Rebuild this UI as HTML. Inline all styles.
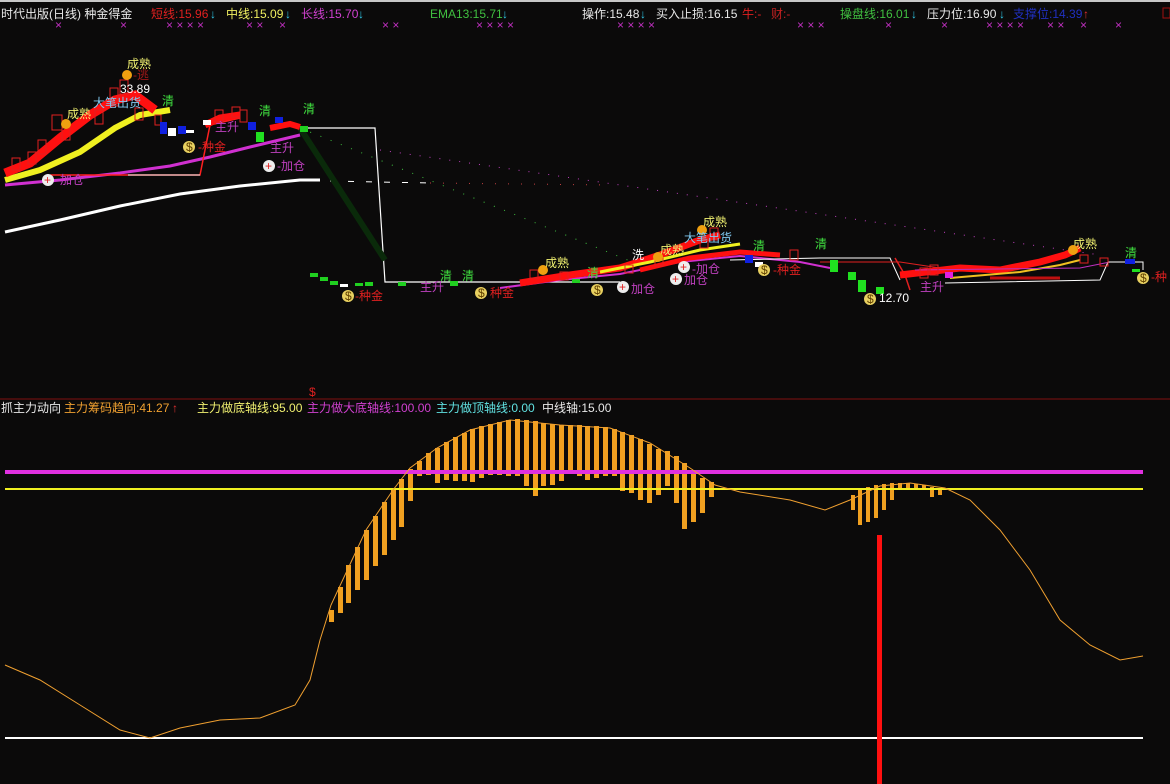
<!DOCTYPE html>
<html><head><meta charset="utf-8"><style>
html,body{margin:0;padding:0;background:#0b0a0a;}
svg{display:block}
text{font-family:"Liberation Sans","Noto Sans CJK SC","WenQuanYi Zen Hei",sans-serif;font-size:12px}
</style></head><body>
<svg width="1170" height="784" viewBox="0 0 1170 784" xmlns="http://www.w3.org/2000/svg">
<rect width="1170" height="784" fill="#0b0a0a"/>
<rect width="1170" height="2" fill="#c8c8c8"/>
<!-- header -->
<text x="1" y="18" fill="#e8e8e8">时代出版(日线) 种金得金</text>
<text x="151" y="18" fill="#e02020">短线:15.96</text><text x="210" y="18" fill="#30c8e8">↓</text>
<text x="226" y="18" fill="#f0f060">中线:15.09</text><text x="285" y="18" fill="#30c8e8">↓</text>
<text x="301" y="18" fill="#d040d0">长线:15.70</text><text x="358" y="18" fill="#30c8e8">↓</text>
<text x="430" y="18" fill="#40c040">EMA13:15.71</text><text x="502" y="18" fill="#30c8e8">↓</text>
<text x="582" y="18" fill="#e8e8e8">操作:15.48</text><text x="640" y="18" fill="#30c8e8">↓</text>
<text x="656" y="18" fill="#e8e8e8">买入止损:16.15</text>
<text x="742" y="18" fill="#e02020">牛:-</text><text x="771" y="18" fill="#c02020">财:-</text>
<text x="840" y="18" fill="#40c040">操盘线:16.01</text><text x="911" y="18" fill="#30c8e8">↓</text>
<text x="927" y="18" fill="#e8e8e8">压力位:16.90</text><text x="999" y="18" fill="#30c8e8">↓</text>
<text x="1013" y="18" fill="#2030c0">支撑位:14.39</text><text x="1083" y="18" fill="#e03030">↑</text>
<rect x="1163" y="8" width="7" height="10" fill="none" stroke="#a01010"/>
<g fill="#c030c0" font-size="9">
<text x="55" y="29" font-size="9">×</text><text x="120" y="29" font-size="9">×</text><text x="166" y="29" font-size="9">× × × ×</text><text x="246" y="29" font-size="9">× ×</text><text x="279" y="29" font-size="9">×</text><text x="382" y="29" font-size="9">× ×</text><text x="476" y="29" font-size="9">× × ×  ×</text>
<text x="617" y="29" font-size="9">× × × ×</text><text x="797" y="29" font-size="9">× × ×</text><text x="885" y="29" font-size="9">×</text><text x="941" y="29" font-size="9">×</text><text x="986" y="29" font-size="9">× × × ×</text><text x="1047" y="29" font-size="9">× ×</text><text x="1080" y="29" font-size="9">×</text><text x="1115" y="29" font-size="9">×</text>
</g>
<!-- main panel -->
<g fill="none">
<polyline points="5,232 60,220 120,206 180,194 240,186 300,180 320,180" stroke="#ffffff" stroke-width="3"/>
<line x1="330" y1="181" x2="430" y2="183" stroke="#ffffff" stroke-dasharray="6,12"/>
<polyline points="5,185 60,180 120,173 170,166 210,157 250,147 300,135" stroke="#d030d0" stroke-width="3"/>
<polyline points="5,180 40,170 80,152 115,128 140,115 170,110" stroke="#f0f020" stroke-width="6"/>
<polyline points="5,173 30,163 60,138 90,115 115,100 135,95 155,110" stroke="#ff1010" stroke-width="9"/>
<polyline points="50,175 200,175 210,125 240,118" stroke="#ff2020" stroke-width="1.5"/>
<polyline points="200,175 128,175" stroke="#fff"/>
<polyline points="300,128 375,128 385,282 620,282" stroke="#ffffff" stroke-width="1.2"/>
<line x1="300" y1="128" x2="385" y2="260" stroke="#0a2a0a" stroke-width="6"/>
<line x1="300" y1="128" x2="640" y2="265" stroke="#40c040" stroke-dasharray="1,10"/>
<line x1="380" y1="150" x2="1100" y2="255" stroke="#c040c0" stroke-dasharray="1,9"/>
<line x1="430" y1="183" x2="610" y2="185" stroke="#c04040" stroke-dasharray="1,12"/>
<polyline points="205,125 220,118 240,115" stroke="#ff1010" stroke-width="7"/>
<polyline points="270,128 290,124 300,127" stroke="#ff1010" stroke-width="6"/>
<polyline points="500,288 560,280 620,274 680,262 740,256 800,262 830,268" stroke="#d030d0" stroke-width="2"/>
<polyline points="520,283 570,275 620,268 660,255 700,240 720,235" stroke="#ff1010" stroke-width="7"/>
<polyline points="600,272 650,262 700,250 740,244" stroke="#f0f020" stroke-width="3"/>
<polyline points="640,270 690,258 740,252 780,255" stroke="#ff1010" stroke-width="5"/>
<polyline points="730,260 820,258 890,258 900,280" stroke="#ffffff"/>
<polyline points="895,258 905,275 910,290" stroke="#e02020" stroke-width="1.5"/>
<polyline points="900,275 960,268 1000,270 1040,262 1065,255 1080,248" stroke="#ff1010" stroke-width="7"/>
<polyline points="950,278 1020,272 1060,265 1080,260" stroke="#f0c020" stroke-width="2"/>
<polyline points="915,270 1080,268 1110,262" stroke="#c030c0"/>
<polyline points="945,283 1100,280 1108,262 1143,262 1143,270" stroke="#ffffff"/>
<polyline points="990,278 1060,278" stroke="#c01010" stroke-width="3"/>
<polyline points="820,262 900,262 940,268" stroke="#e02020"/>
</g>
<!-- candles -->
<g fill="none" stroke="#e02020">
<rect x="12" y="158" width="8" height="12"/><rect x="28" y="152" width="8" height="12"/><rect x="38" y="140" width="8" height="14"/><rect x="52" y="115" width="10" height="15"/><rect x="62" y="128" width="8" height="12"/><rect x="95" y="110" width="8" height="14"/><rect x="110" y="88" width="8" height="18"/><rect x="120" y="80" width="8" height="14"/><rect x="135" y="108" width="8" height="12"/><rect x="155" y="115" width="6" height="10"/><rect x="215" y="110" width="8" height="12"/><rect x="232" y="107" width="8" height="10"/><rect x="240" y="110" width="7" height="12"/>
<rect x="530" y="270" width="8" height="8"/><rect x="625" y="265" width="8" height="8"/><rect x="700" y="238" width="8" height="10"/><rect x="710" y="228" width="8" height="12"/><rect x="790" y="250" width="8" height="10"/><rect x="920" y="268" width="8" height="10"/><rect x="1080" y="255" width="8" height="8"/><rect x="1100" y="258" width="8" height="8"/>
<rect x="560" y="272" width="8" height="8"/><rect x="655" y="258" width="8" height="8"/><rect x="930" y="265" width="8" height="10"/>
</g>
<g>
<rect x="160" y="122" width="7" height="12" fill="#1020e0"/><rect x="168" y="128" width="8" height="8" fill="#fff"/><rect x="178" y="126" width="8" height="8" fill="#1020e0"/><rect x="186" y="130" width="8" height="3" fill="#fff"/>
<rect x="203" y="120" width="8" height="5" fill="#fff"/><rect x="248" y="122" width="8" height="8" fill="#1020e0"/><rect x="256" y="132" width="8" height="10" fill="#20e020"/><rect x="275" y="117" width="8" height="6" fill="#1020e0"/><rect x="300" y="126" width="8" height="6" fill="#20d020"/>
<rect x="310" y="273" width="8" height="4" fill="#20d020"/><rect x="320" y="277" width="8" height="4" fill="#20d020"/><rect x="330" y="281" width="8" height="4" fill="#20d020"/><rect x="340" y="284" width="8" height="3" fill="#fff"/><rect x="355" y="283" width="8" height="3" fill="#20d020"/><rect x="365" y="282" width="8" height="4" fill="#20d020"/><rect x="398" y="282" width="8" height="4" fill="#20d020"/><rect x="450" y="281" width="8" height="5" fill="#20d020"/><rect x="572" y="279" width="8" height="4" fill="#20d020"/>
<rect x="745" y="255" width="8" height="8" fill="#1020e0"/><rect x="755" y="262" width="8" height="5" fill="#fff"/><rect x="830" y="260" width="8" height="12" fill="#20e020"/><rect x="848" y="272" width="8" height="8" fill="#20e020"/><rect x="858" y="280" width="8" height="12" fill="#20e020"/><rect x="876" y="287" width="8" height="7" fill="#20e020"/><rect x="945" y="272" width="8" height="6" fill="#e020e0"/><rect x="1125" y="259" width="10" height="5" fill="#1020e0"/><rect x="1132" y="269" width="8" height="3" fill="#20e020"/>
</g>
<!-- labels -->
<g>
<text x="127" y="68" fill="#f0f070" font-size="13">成熟</text><circle cx="127" cy="75" r="5" fill="#f0a010"/><text x="133" y="79" fill="#a01818" font-size="12">-逃</text>
<text x="120" y="93" fill="#fff" font-size="12">33.89</text>
<text x="67" y="118" fill="#f0f070" font-size="13">成熟</text><circle cx="66" cy="124" r="5" fill="#f0a010"/>
<text x="93" y="107" fill="#80c8f0" font-size="13">大笔出货</text>
<text x="162" y="105" fill="#40e040" font-size="13">清</text><text x="259" y="115" fill="#40e040" font-size="13">清</text><text x="303" y="113" fill="#40e040" font-size="13">清</text>
<text x="215" y="131" fill="#c040c0" font-size="13">主升</text><text x="270" y="152" fill="#c040c0" font-size="13">主升</text>
<circle cx="189" cy="147" r="6" fill="#e8d060"/><text x="186" y="151" fill="#604000" font-size="9">$</text><text x="198" y="151" fill="#e02020" font-size="13">-种金</text>
<circle cx="48" cy="180" r="6" fill="#eee"/><text x="44" y="184" fill="#e02020" font-size="11">+</text><text x="56" y="184" fill="#c040c0" font-size="13">-加仓</text>
<circle cx="269" cy="166" r="6" fill="#eee"/><text x="265" y="170" fill="#e02020" font-size="11">+</text><text x="277" y="170" fill="#c040c0" font-size="13">-加仓</text>
<circle cx="348" cy="296" r="6" fill="#e8d060"/><text x="345" y="300" fill="#604000" font-size="9">$</text><text x="355" y="300" fill="#e02020" font-size="13">-种金</text>
<text x="420" y="291" fill="#c040c0" font-size="13">主升</text><text x="440" y="280" fill="#40e040" font-size="13">清</text><text x="462" y="280" fill="#40e040" font-size="13">清</text>
<circle cx="481" cy="293" r="6" fill="#e8d060"/><text x="478" y="297" fill="#604000" font-size="9">$</text><text x="490" y="297" fill="#e02020" font-size="13">种金</text>
<text x="545" y="267" fill="#f0f070" font-size="13">成熟</text><circle cx="543" cy="270" r="5" fill="#f0a010"/><text x="587" y="277" fill="#40e040" font-size="13">清</text>
<circle cx="597" cy="290" r="6" fill="#e8d060"/><text x="594" y="294" fill="#604000" font-size="9">$</text>
<circle cx="623" cy="287" r="6" fill="#eee"/><text x="619" y="291" fill="#e02020" font-size="11">+</text><text x="631" y="293" fill="#c040c0" font-size="13">加仓</text>
<text x="632" y="259" fill="#fff" font-size="13">洗</text><text x="660" y="254" fill="#f0f070" font-size="13">成熟</text><circle cx="658" cy="257" r="5" fill="#f0a010"/>
<text x="703" y="226" fill="#f0f070" font-size="13">成熟</text><circle cx="702" cy="230" r="5" fill="#f0a010"/><text x="684" y="242" fill="#80c8f0" font-size="13">大笔出货</text>
<circle cx="684" cy="267" r="6" fill="#eee"/><text x="680" y="271" fill="#e02020" font-size="11">+</text><text x="692" y="273" fill="#c040c0" font-size="13">-加仓</text>
<circle cx="676" cy="279" r="6" fill="#eee"/><text x="672" y="283" fill="#e02020" font-size="11">+</text><text x="684" y="284" fill="#c040c0" font-size="13">加仓</text>
<text x="753" y="250" fill="#40e040" font-size="13">清</text><text x="815" y="248" fill="#40e040" font-size="13">清</text>
<circle cx="764" cy="270" r="6" fill="#e8d060"/><text x="761" y="274" fill="#604000" font-size="9">$</text><text x="773" y="274" fill="#e02020" font-size="13">-种金</text>
<circle cx="870" cy="299" r="6" fill="#e8d060"/><text x="867" y="303" fill="#604000" font-size="9">$</text><text x="879" y="302" fill="#fff" font-size="12">12.70</text>
<text x="920" y="291" fill="#c040c0" font-size="13">主升</text>
<text x="1073" y="248" fill="#f0f070" font-size="13">成熟</text><circle cx="1073" cy="250" r="5" fill="#f0a010"/><text x="1125" y="257" fill="#40e040" font-size="13">清</text>
<circle cx="1143" cy="278" r="6" fill="#e8d060"/><text x="1140" y="282" fill="#604000" font-size="9">$</text><text x="1151" y="281" fill="#e02020" font-size="13">-种</text>
</g>
<!-- separator -->
<text x="309" y="396" fill="#e02020" font-size="11">$</text>
<line x1="0" y1="399" x2="1170" y2="399" stroke="#801010"/>
<!-- indicator header -->
<text x="1" y="412" fill="#e8e8e8">抓主力动向</text>
<text x="64" y="412" fill="#f0a030">主力筹码趋向:41.27</text><text x="172" y="412" fill="#e03030">↑</text>
<text x="197" y="412" fill="#f0f070">主力做底轴线:95.00</text>
<text x="307" y="412" fill="#d040d0">主力做大底轴线:100.00</text>
<text x="436" y="412" fill="#60e0e0">主力做顶轴线:0.00</text>
<text x="542" y="412" fill="#e8e8e8">中线轴:15.00</text>
<!-- indicator -->
<g fill="#f0a020">
<rect x="329" y="610" width="5" height="12"/><rect x="338" y="587" width="5" height="26"/><rect x="346" y="565" width="5" height="38"/><rect x="355" y="547" width="5" height="43"/><rect x="364" y="530" width="5" height="50"/><rect x="373" y="516" width="5" height="50"/><rect x="382" y="502" width="5" height="53"/><rect x="391" y="489" width="5" height="51"/><rect x="399" y="479" width="5" height="48"/><rect x="408" y="469" width="5" height="32"/><rect x="417" y="461" width="5" height="15"/><rect x="426" y="453" width="5" height="22"/><rect x="435" y="448" width="5" height="35"/><rect x="444" y="442" width="5" height="38"/><rect x="453" y="437" width="5" height="44"/><rect x="462" y="433" width="5" height="48"/><rect x="470" y="429" width="5" height="53"/><rect x="479" y="426" width="5" height="52"/><rect x="488" y="424" width="5" height="51"/><rect x="497" y="422" width="5" height="53"/><rect x="506" y="420" width="5" height="56"/><rect x="515" y="419" width="5" height="57"/><rect x="524" y="420" width="5" height="66"/><rect x="533" y="421" width="5" height="75"/><rect x="541" y="423" width="5" height="63"/><rect x="550" y="424" width="5" height="61"/><rect x="559" y="425" width="5" height="56"/><rect x="568" y="425" width="5" height="49"/><rect x="577" y="425" width="5" height="51"/><rect x="585" y="426" width="5" height="54"/><rect x="594" y="426" width="5" height="52"/><rect x="603" y="427" width="5" height="49"/><rect x="612" y="429" width="5" height="47"/><rect x="620" y="432" width="5" height="59"/><rect x="629" y="435" width="5" height="58"/><rect x="638" y="439" width="5" height="61"/><rect x="647" y="444" width="5" height="59"/><rect x="656" y="449" width="5" height="46"/><rect x="665" y="451" width="5" height="35"/><rect x="674" y="456" width="5" height="47"/><rect x="682" y="463" width="5" height="66"/><rect x="691" y="471" width="5" height="51"/><rect x="700" y="478" width="5" height="35"/><rect x="709" y="482" width="5" height="15"/>
<rect x="851" y="495" width="4" height="15"/><rect x="858" y="490" width="4" height="35"/><rect x="866" y="487" width="4" height="35"/><rect x="874" y="485" width="4" height="33"/><rect x="882" y="484" width="4" height="26"/><rect x="890" y="483" width="4" height="17"/><rect x="898" y="483" width="4" height="7"/><rect x="906" y="483" width="4" height="7"/><rect x="914" y="484" width="4" height="4"/><rect x="922" y="485" width="4" height="5"/><rect x="930" y="487" width="4" height="10"/><rect x="938" y="489" width="4" height="6"/>
</g>
<line x1="5" y1="472" x2="1143" y2="472" stroke="#e030e0" stroke-width="4"/>
<line x1="5" y1="489" x2="1143" y2="489" stroke="#f0f020" stroke-width="2"/>
<line x1="5" y1="738" x2="1143" y2="738" stroke="#ffffff" stroke-width="2"/>
<polyline fill="none" stroke="#f0a030" stroke-width="1" points="5,665 40,680 80,705 120,730 150,738 180,728 220,720 260,718 295,705 310,680 320,640 331,605 345,575 366,530 393,490 410,468 437,448 470,430 510,420 560,425 610,428 650,443 690,468 715,485 740,492 790,500 825,510 850,500 880,486 910,483 945,488 970,500 1000,530 1030,570 1060,620 1090,645 1120,660 1143,656"/>
<rect x="877" y="535" width="5" height="249" fill="#ff1010"/>
</svg>
</body></html>
